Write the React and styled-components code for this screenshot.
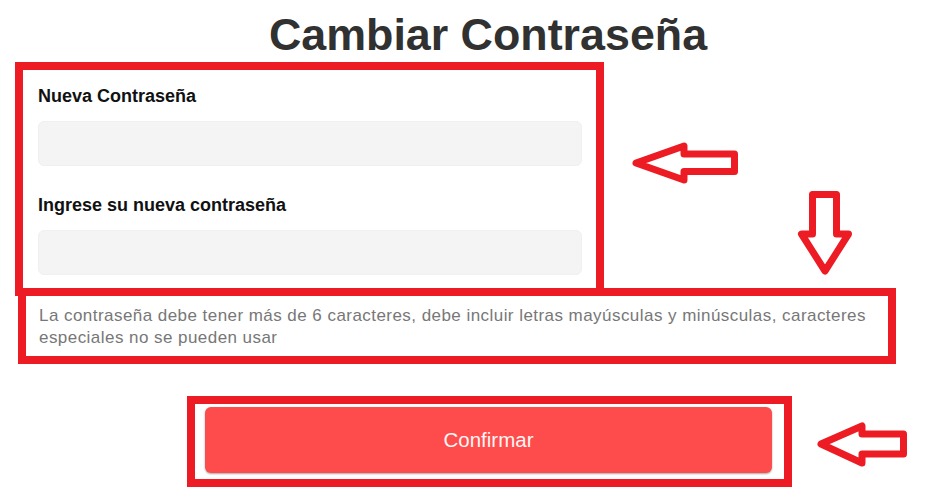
import React from "react";
import styled, { createGlobalStyle } from "styled-components";

const RED = "#ed1c24";

export default function App() {
  const [password, setPassword] = React.useState("");
  const [confirm, setConfirm] = React.useState("");

  return (
    <>
      <GlobalStyle />
      <Page>
        <Title>Cambiar Contraseña</Title>

        <FieldsBox>
          <Label htmlFor="new-password">Nueva Contraseña</Label>
          <Input id="new-password" type="password" value={password} onChange={(e) => setPassword(e.target.value)} />
          <Label htmlFor="confirm-password" $spaced>
            Ingrese su nueva contraseña
          </Label>
          <Input id="confirm-password" type="password" value={confirm} onChange={(e) => setConfirm(e.target.value)} />
        </FieldsBox>

        <HintBox>
          La contraseña debe tener más de 6 caracteres, debe incluir letras mayúsculas y minúsculas, caracteres especiales no se pueden usar
        </HintBox>

        <ButtonBox>
          <ConfirmBtn type="button">Confirmar</ConfirmBtn>
        </ButtonBox>

        {/* annotation arrows drawn over the page */}
        <Annotations viewBox="0 0 944 492" width="944" height="492">
          <polygon points="636,163 684,146 684,154 734.5,154 734.5,171.5 684,171.5 684,180" />
          <polygon points="812.5,194.5 836.5,194.5 836.5,234 848.5,234 825,271 801.5,234 812.5,234" />
          <polygon points="821,444 862,426 862,434 903.5,434 903.5,454 862,454 862,463" />
        </Annotations>
      </Page>
    </>
  );
}

const GlobalStyle = createGlobalStyle`
  html, body {
    margin: 0;
    padding: 0;
    background: #fff;
  }
  body {
    font-family: "Liberation Sans", Arial, sans-serif;
  }
  * {
    box-sizing: border-box;
  }
`;

const Page = styled.div`
  position: relative;
  width: 944px;
  height: 492px;
  overflow: hidden;
  padding-top: 8px;
`;

const Title = styled.h1`
  margin: 0;
  padding-left: 32px;
  text-align: center;
  font-size: 44.8px;
  line-height: 52px;
  font-weight: 700;
  color: #313131;
`;

const FieldsBox = styled.div`
  width: 589px;
  margin: 2px 0 0 15px;
  border: 8px solid ${RED};
  padding: 16px 14px 13px 15px;
  display: flex;
  flex-direction: column;
`;

const Label = styled.label`
  display: block;
  margin-top: ${(p) => (p.$spaced ? "29px" : "0")};
  font-size: 18px;
  line-height: 21px;
  font-weight: 700;
  color: #111;
`;

const Input = styled.input`
  display: block;
  width: 100%;
  height: 45px;
  margin-top: 14px;
  border: 1px solid #f0f0f0;
  border-radius: 6px;
  background: #f4f4f4;
  padding: 0 12px;
  font-size: 16px;
  outline: none;
`;

const HintBox = styled.div`
  width: 878px;
  margin: -8px 0 0 18px;
  border: 8px solid ${RED};
  padding: 9px 13px 7px 13px;
  font-size: 17px;
  letter-spacing: 0.45px;
  line-height: 22px;
  color: #777;
`;

const ButtonBox = styled.div`
  width: 605px;
  margin: 32px 0 0 187px;
  border: 8px solid ${RED};
  padding: 3px 12px 6px 10px;
`;

const ConfirmBtn = styled.button`
  display: flex;
  align-items: center;
  justify-content: center;
  width: 100%;
  height: 66px;
  border: none;
  border-radius: 6px;
  background: #fe4c4c;
  box-shadow: 0 1px 2px rgba(0, 0, 0, 0.35);
  color: #fff6f4;
  font-family: "Liberation Sans", Arial, sans-serif;
  font-size: 20.5px;
  cursor: pointer;
`;

const Annotations = styled.svg`
  position: absolute;
  left: 0;
  top: 0;
  pointer-events: none;
  polygon {
    fill: none;
    stroke: ${RED};
    stroke-width: 7;
    stroke-linejoin: round;
  }
`;
